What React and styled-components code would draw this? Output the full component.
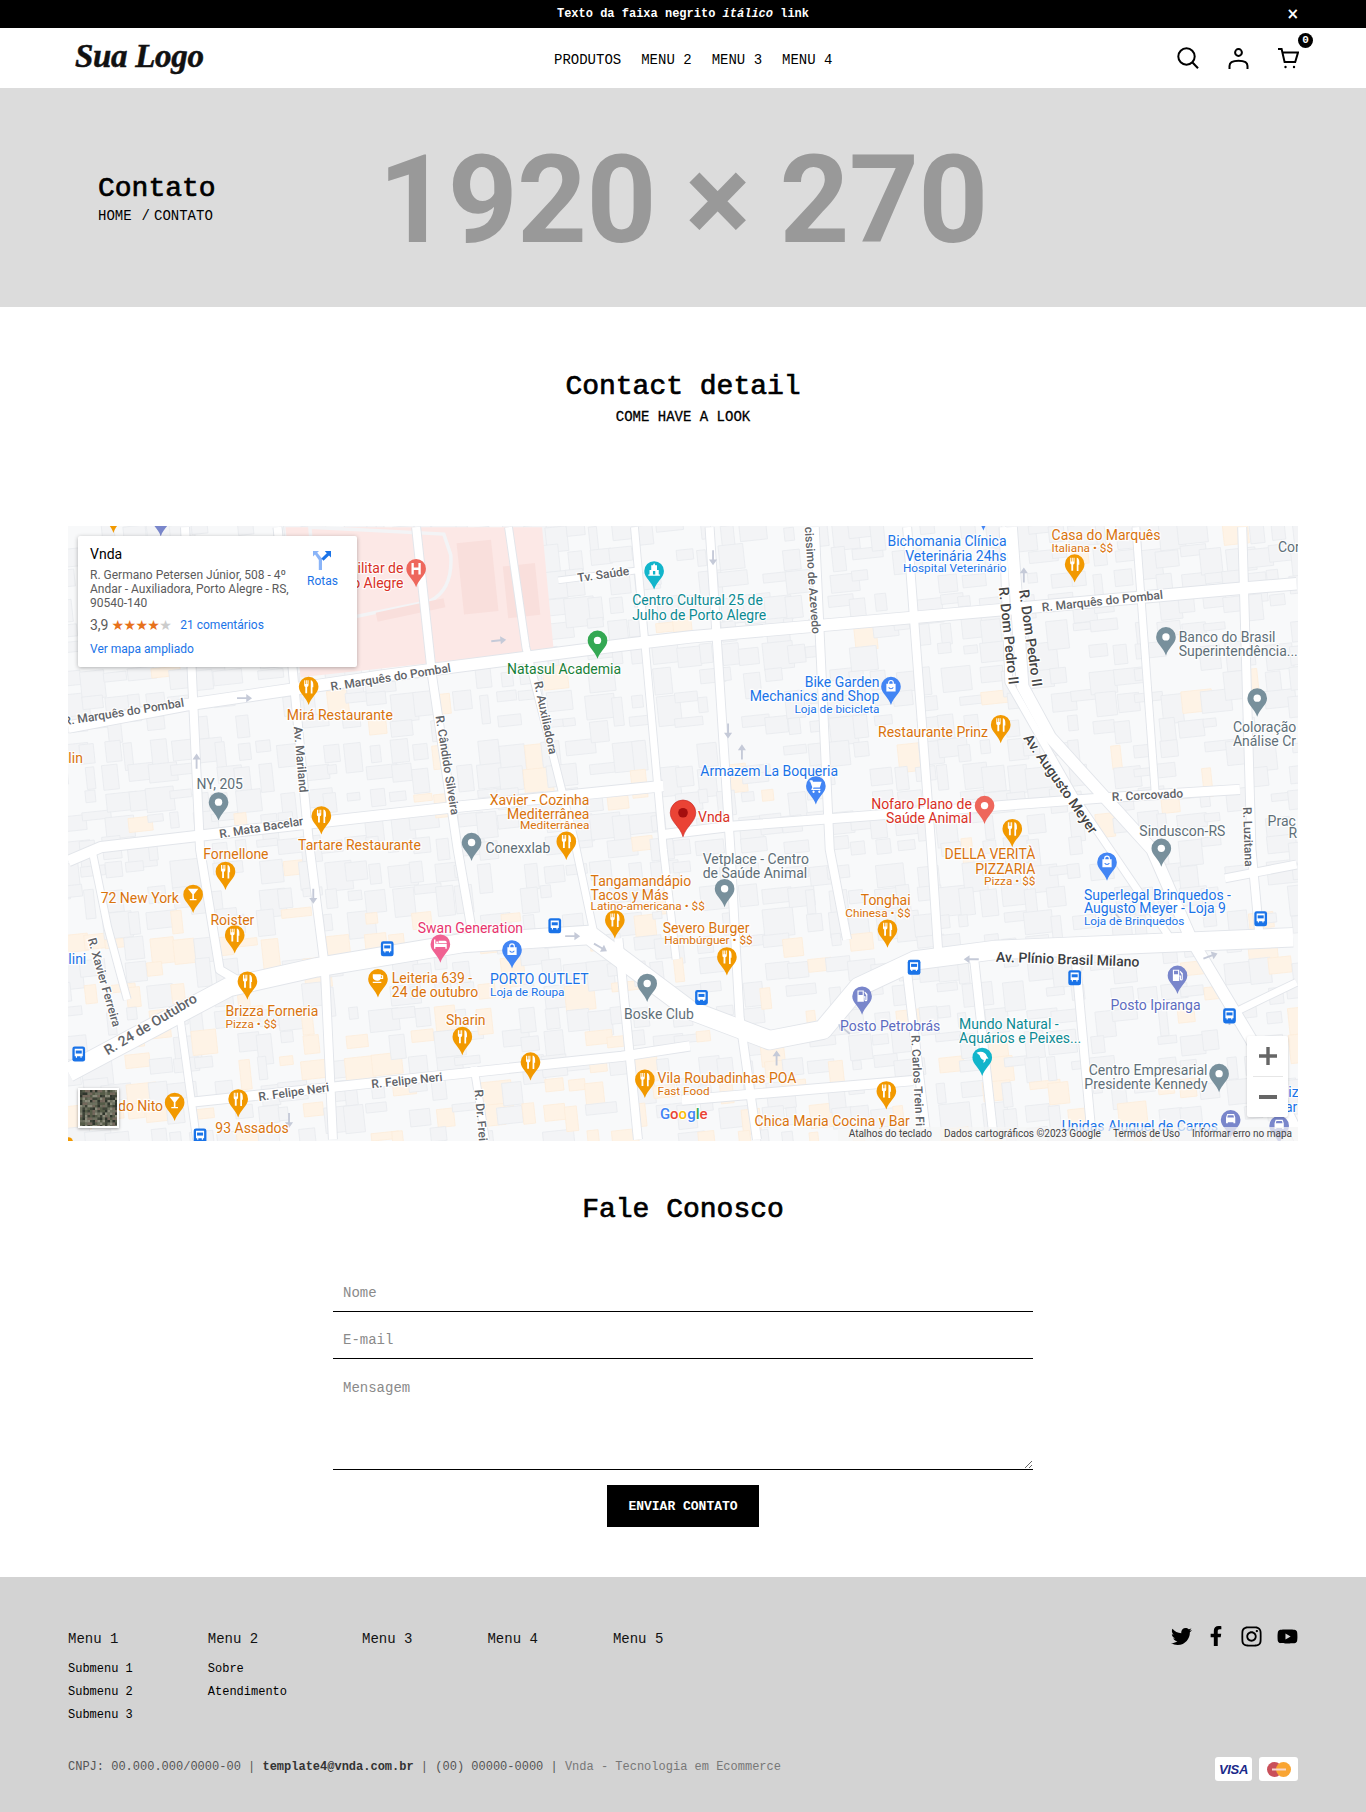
import React from 'react';
import styled, { createGlobalStyle } from 'styled-components';
import { FaTwitter, FaFacebookF, FaInstagram, FaYoutube } from 'react-icons/fa';

const Global = createGlobalStyle`
  html, body { margin: 0; padding: 0; background: #fff; }
  body { font-family: "Liberation Mono", monospace; color: #000; }
  * { box-sizing: border-box; }
`;

const Page = styled.div`width: 1366px; display: flex; flex-direction: column;`;

const TopBar = styled.div`
  height: 28px; background: #000; color: #fff; position: relative;
  display: flex; align-items: center; justify-content: center;
  font-size: 12px; font-weight: 700;
`;
const Close = styled.span`position: absolute; right: 67px; top: 6px; font-size: 15px; line-height: 16px; font-family: "DejaVu Sans", sans-serif;`;

const Header = styled.header`
  height: 60px; background: #fff; display: grid;
  grid-template-columns: 479px 1fr auto; align-items: center;
  padding: 0 68px 0 75px;
`;
const Logo = styled.div`
  font-family: "Liberation Serif", serif; font-style: italic; font-weight: 700;
  font-size: 33px; letter-spacing: -0.3px; line-height: 40px; color: #111; margin-top: -4px;
  -webkit-text-stroke: 0.5px #111;
`;
const Nav = styled.nav`display: flex; gap: 20px; font-size: 14px; margin-top: 4px;`;
const NavItem = styled.a`color: #000; white-space: nowrap;`;
const Tools = styled.div`display: flex; gap: 29px; align-items: center; margin-top: 0; margin-right: -1px;`;
const CartWrap = styled.div`position: relative; width: 21px; height: 21px;`;
const Badge = styled.span`
  position: absolute; left: 20px; top: -15px; width: 15px; height: 15px; border-radius: 50%;
  background: #000; color: #fff; font-size: 11px; font-weight: 700; line-height: 15px; text-align: center;
`;

const Hero = styled.section`
  height: 219px; background: #dcdcdc; position: relative;
  display: flex; align-items: center; justify-content: center;
`;
const HeroPlaceholder = styled.div`
  font-family: Roboto, sans-serif; font-weight: 700; font-size: 122px; line-height: 122px; margin-top: 6px;
  color: #999; letter-spacing: -0.6px; white-space: pre; filter: blur(0.5px);
`;
const HeroCaption = styled.div`position: absolute; left: 98px; top: 85px;`;
const HeroTitle = styled.h1`margin: 0; font-size: 28px; line-height: 32px; font-weight: 400; -webkit-text-stroke: 0.7px #000;`;
const Crumbs = styled.div`font-size: 14px; line-height: 20px; margin-top: 1px; display: flex;`;
const CrumbSep = styled.span`margin: 0 4px 0 10px;`;

const Centered = styled.section`display: flex; flex-direction: column; align-items: center;`;
const SectionTitle = styled.h2`
  margin: ${p => p.$top}px 0 0; font-size: 28px; line-height: 36px; font-weight: 400; -webkit-text-stroke: 0.7px #000;
`;
const SectionSub = styled.div`margin-top: 2px; font-size: 14px; line-height: 20px; -webkit-text-stroke: 0.3px #000;`;

const MapFrame = styled.div`
  position: relative; margin: 99px 0 0 68px; width: 1230px; height: 615px; overflow: hidden; background: #f8f9fa;
`;
const MapSvg = styled.svg`display: block; width: 1230px; height: 615px;`;
const Label = styled.text`
  font-family: Roboto, sans-serif; font-size: ${p => (p.$small ? 10.2 : 12.1)}px;
  fill: ${p => p.$color}; text-anchor: ${p => p.$anchor};
  dominant-baseline: central; paint-order: stroke; stroke: #fff; stroke-width: 2px; stroke-opacity: .85;
`;
const RoadLabel = styled.text`
  font-family: Roboto, sans-serif; font-size: ${p => p.$size || 10.4}px; font-weight: 500;
  fill: ${p => p.$color || '#5f6368'}; text-anchor: middle; dominant-baseline: central;
  paint-order: stroke; stroke: #fff; stroke-width: 2px;
`;
const InfoCard = styled.div`
  position: absolute; left: 10px; top: 10px; width: 279px; height: 131px; background: #fff;
  box-shadow: 0 1px 4px rgba(0,0,0,.3); border-radius: 2px; padding: 10px 12px;
  font-family: Roboto, sans-serif; font-size: 12px; color: #5b5b5b; display: flex;
`;
const InfoMain = styled.div`width: 205px;`;
const InfoName = styled.div`font-size: 14px; font-weight: 400; color: #000; line-height: 17px; margin-bottom: 5px;`;
const InfoAddress = styled.div`line-height: 14px;`;
const InfoRating = styled.div`display: flex; align-items: center; margin-top: 5px; line-height: 20px;`;
const RateValue = styled.span`font-size: 14px; color: #5b5b5b;`;
const Stars = styled.span`font-family: "DejaVu Sans", sans-serif; font-size: 14px; letter-spacing: -0.6px; color: #e7711b; margin-left: 3px;`;
const StarOff = styled.span`color: #ccc;`;
const MapLink = styled.a`color: #1a73e8; font-size: 12px; margin-left: ${p => p.$left || 0}px;`;
const ExpandRow = styled.div`margin-top: 6px; line-height: 16px;`;
const Directions = styled.div`display: flex; flex-direction: column; align-items: center; margin-left: 12px; margin-top: 4px; gap: 4px; color: #1a73e8;`;
const ZoomBox = styled.div`
  position: absolute; right: 10px; bottom: 24px; width: 41px; height: 81px; background: #fff;
  box-shadow: 0 1px 3px rgba(0,0,0,.18); border-radius: 2px; display: flex; flex-direction: column; align-items: center;
`;
const ZoomBtn = styled.div`height: 40px; display: flex; align-items: center; justify-content: center;`;
const ZoomRule = styled.div`width: 30px; height: 1px; background: #e6e6e6;`;
const Satellite = styled.div`
  position: absolute; left: 10px; bottom: 13px; width: 41px; height: 40px; border: 2px solid #fff;
  box-shadow: 0 1px 3px rgba(0,0,0,.35); background: #5a5f52; overflow: hidden;
`;
const Attribution = styled.div`
  position: absolute; right: 0; bottom: 0; height: 14px; width: 460px; background: rgba(245,245,245,.72);
  font-family: Roboto, sans-serif; font-size: 10px; line-height: 14px; color: #444;
  display: flex; justify-content: flex-end; gap: 12px; padding-right: 6px; white-space: nowrap;
`;

const FormWrap = styled.form`width: 700px; margin: 44px auto 0; display: flex; flex-direction: column; gap: 7px;`;
const Field = styled.input`
  height: 40px; border: 0; border-bottom: 1px solid #000; outline: 0; padding: 3px 10px 0;
  font: 14px "Liberation Mono", monospace; background: transparent;
  &::placeholder { color: #8a8a8a; opacity: 1; }
`;
const Area = styled.textarea`
  height: 104px; border: 0; border-bottom: 1px solid #000; outline: 0; padding: 14px 10px;
  font: 14px "Liberation Mono", monospace; background: transparent; display: block;
  &::placeholder { color: #8a8a8a; opacity: 1; }
`;
const Submit = styled.button`
  width: 152px; height: 42px; margin: 8px auto 0; background: #000; color: #fff; border: 0;
  font: 700 13px "Liberation Mono", monospace;
`;

const Footer = styled.footer`
  margin-top: 50px; height: 235px; background: #d3d3d3; padding: 52px 68px 0;
  display: flex; flex-direction: column;
`;
const FooterTop = styled.div`display: flex; justify-content: space-between; height: 124px;`;
const FooterCols = styled.div`display: flex; gap: 75px;`;
const FooterCol = styled.div`display: flex; flex-direction: column;`;
const ColHead = styled.div`font-size: 14px; line-height: 20px; margin-bottom: 9px; color: #111;`;
const ColLink = styled.a`font-size: 12px; line-height: 23px; color: #000;`;
const Social = styled.div`display: flex; align-items: center; gap: 14px; height: 20px; margin-top: -3px; color: #000;`;
const FooterBottom = styled.div`display: flex; justify-content: space-between; align-items: center;`;
const Legal = styled.div`font-size: 12px; line-height: 20px; color: #555;`;
const LegalStrong = styled.strong`color: #333; font-weight: 700;`;
const LegalSoft = styled.span`color: #777;`;
const PayRow = styled.div`display: flex; gap: 7px; margin-top: 4px;`;
const PayCard = styled.div`
  width: ${p => p.$w}px; height: 24px; background: #fff; border-radius: 3px;
  display: flex; align-items: center; justify-content: center;
`;
const VisaText = styled.span`
  font-family: "Liberation Sans", sans-serif; font-style: italic; font-weight: 700; font-size: 13px; color: #1a2a8a; letter-spacing: -.3px;
`;

/* ---- map data, in a 1063x532 drawing space ---- */
const roads = [
  [10, '59,629 160,610 337,584 538,558 597,551 861,528 1062,510 1122,505'],
  [9, '59,745 87,733 190,721 396,698 574,680'],
  [8, '574,722 632,715 892,695 960,690 1073,683'],
  [16, '59,928 198,854 274,837 400,816 510,809 597,874 666,900 712,891 743,854 792,831 861,822 1119,811'],
  [10, '875,456 885,594 909,638 997,735 1031,813 1083,900 1125,986'],
  [6, '868,456 873,590 930,690 1015,815'],
  [7, '240,456 253,577 267,727 281,837 288,986'],
  [7, '360,456 374,586 396,735 410,815'],
  [6, '410,923 420,986'],
  [6, '440,456 455,560 497,727 514,808'],
  [7, '535,812 552,986'],
  [6, '549,456 574,735 585,830'],
  [7, '614,456 632,735 640,880 655,986'],
  [7, '705,456 718,735 733,813'],
  [7, '785,842 802,986'],
  [7, '785,456 806,735 812,825'],
  [6, '983,456 1000,690'],
  [7, '1075,456 1083,735 1090,810'],
  [7, '160,456 173,735 190,839 205,848'],
  [6, '80,738 93,802 110,865'],
  [6, '156,883 170,986'],
  [8, '163,954 538,914 597,905'],
  [8, '590,952 790,935'],
  [5, '483,502 555,493'],
  [7, '843,830 860,986'],
  [7, '930,820 945,986'],
  [7, '1060,760 1122,748'],
  [6, '1122,850 1060,880'],
];

function seeded(seed) {
  let s = seed;
  return () => { s = (s * 16807) % 2147483647; return (s - 1) / 2147483646; };
}
const buildings = (() => {
  const r = seeded(4217);
  const list = [];
  for (let x = 30; x < 1160; x += 19) {
    for (let y = 430; y < 1010; y += 21) {
      if (r() < 0.24) continue;
      const warm = (y > 770 && x < 700) || (x > 1000 && y > 800) || (y > 900);
      const w = 7 + r() * 20; const h = 6 + r() * 20;
      const orange = r() < (warm ? 0.34 : 0.05);
      list.push({ x: x + r() * 6, y: y + r() * 6, w, h, orange });
    }
  }
  return list;
})();
const satellite = (() => {
  const r = seeded(99);
  const tones = ['#3f4438', '#6d705f', '#565c48', '#8a8a7a', '#2f352c', '#74685c'];
  const list = [];
  for (let x = 0; x < 40; x += 2.5) for (let y = 0; y < 40; y += 2.5) list.push({ x, y, c: tones[Math.floor(r() * tones.length)] });
  return list;
})();

const C = { o: '#d9730d', b: '#1a73e8', g: '#5f6f78', r: '#d93025', p: '#e8336d', v: '#5c6bc0', t: '#0b8a93', n: '#188038' };
const labels = [
  ['Hospital Militar de', 349, 491, 'r', 'end'], ['Porto Alegre', 349, 504, 'r', 'end'],
  ['Centro Cultural 25 de', 547, 519, 't', 'start'], ['Julho de Porto Alegre', 547, 532, 't', 'start'],
  ['Natasul Academia', 488, 579, 'n', 'middle'], ['Mirá Restaurante', 294, 619, 'o', 'middle'],
  ['Xavier - Cozinha', 510, 692, 'o', 'end'], ['Mediterrânea', 510, 704, 'o', 'end'], ['Mediterrânea', 510, 714, 'o', 'end', 1],
  ['Tartare Restaurante', 311, 731, 'o', 'middle'], ['Fornellone', 204, 739, 'o', 'middle'],
  ['72 New York', 87, 777, 'o', 'start'], ['Roister', 201, 796, 'o', 'middle'],
  ['Leiteria 639 -', 339, 846, 'o', 'start'], ['24 de outubro', 339, 858, 'o', 'start'],
  ['Brizza Forneria', 195, 875, 'o', 'start'], ['Pizza • $$', 195, 886, 'o', 'start', 1],
  ['Sharin', 403, 883, 'o', 'middle'], ['Bar do Nito', 141, 957, 'o', 'end'], ['93 Assados', 218, 976, 'o', 'middle'],
  ['Tangamandápio', 511, 762, 'o', 'start'], ['Tacos y Más', 511, 774, 'o', 'start'], ['Latino-americana • $$', 511, 784, 'o', 'start', 1],
  ['Severo Burger', 611, 803, 'o', 'middle'], ['Hambúrguer • $$', 613, 813, 'o', 'middle', 1],
  ['Vila Roubadinhas POA', 569, 933, 'o', 'start'], ['Fast Food', 569, 944, 'o', 'start', 1],
  ['Chica Maria Cocina y Bar', 653, 970, 'o', 'start'], ['Tonghai', 788, 779, 'o', 'end'], ['Chinesa • $$', 788, 790, 'o', 'end', 1],
  ['Restaurante Prinz', 855, 633, 'o', 'end'], ['DELLA VERITÀ', 896, 739, 'o', 'end'], ['PIZZARIA', 896, 752, 'o', 'end'], ['Pizza • $$', 896, 762, 'o', 'end', 1],
  ['Casa do Marquês', 910, 463, 'o', 'start'], ['Italiana • $$', 910, 474, 'o', 'start', 1], ['lin', 59, 656, 'o', 'start'],
  ['Bichomania Clínica', 871, 468, 'b', 'end'], ['Veterinária 24hs', 871, 481, 'b', 'end'], ['Hospital Veterinário', 871, 491, 'b', 'end', 1],
  ['Bike Garden', 761, 590, 'b', 'end'], ['Mechanics and Shop', 761, 602, 'b', 'end'], ['Loja de bicicleta', 761, 613, 'b', 'end', 1],
  ['Armazem La Boqueria', 606, 667, 'b', 'start'], ['PORTO OUTLET', 424, 847, 'b', 'start'], ['Loja de Roupa', 424, 858, 'b', 'start', 1],
  ['Superlegal Brinquedos -', 938, 774, 'b', 'start'], ['Augusto Meyer - Loja 9', 938, 786, 'b', 'start'], ['Loja de Brinquedos', 938, 797, 'b', 'start', 1],
  ['Unidas Aluguel de Carros', 1054, 974, 'b', 'end'], ['lini', 59, 830, 'b', 'start'], ['liz', 1112, 945, 'b', 'start'], ['ar', 1112, 958, 'b', 'start'],
  ['NY, 205', 190, 678, 'g', 'middle'], ['Conexxlab', 420, 734, 'g', 'start'], ['Vetplace - Centro', 608, 743, 'g', 'start'], ['de Saúde Animal', 608, 755, 'g', 'start'],
  ['Boske Club', 540, 877, 'g', 'start'], ['Banco do Brasil', 1020, 551, 'g', 'start'], ['Superintendência...', 1020, 563, 'g', 'start'],
  ['Coloração', 1067, 629, 'g', 'start'], ['Análise Cr', 1067, 641, 'g', 'start'], ['Sinduscon-RS', 986, 719, 'g', 'start'],
  ['Praç', 1097, 710, 'g', 'start'], ['R', 1115, 721, 'g', 'start'], ['Centro Empresarial', 1045, 926, 'g', 'end'], ['Presidente Kennedy', 1045, 938, 'g', 'end'], ['Cor', 1106, 473, 'g', 'start'],
  ['Vnda', 604, 707, 'r', 'start'], ['Nofaro Plano de', 841, 696, 'r', 'end'], ['Saúde Animal', 841, 708, 'r', 'end'],
  ['Swan Generation', 407, 803, 'p', 'middle'], ['Posto Petrobrás', 727, 888, 'v', 'start'], ['Posto Ipiranga', 961, 870, 'v', 'start'],
  ['Mundo Natural -', 830, 886, 't', 'start'], ['Aquários e Peixes...', 830, 898, 't', 'start'],
];
const roadLabels = [
  ['R. Marquês do Pombal', 338, 586, -9], ['R. Marquês do Pombal', 107, 616, -9], ['R. Marquês do Pombal', 954, 520, -6],
  ['Tv. Saúde', 522, 497, -8], ['Av. Mariland', 260, 657, 85], ['R. Cândido Silveira', 387, 662, 81], ['R. Auxiliadora', 472, 621, 78],
  ['cissimo de Azevedo', 703, 502, 86], ['R. Dom Pedro II', 873, 550, 84, 12.2, '#444'], ['R. Dom Pedro II', 892, 552, 82, 12.2, '#444'], ['Av. Augusto Meyer', 918, 678, 55, 12.2, '#444'],
  ['R. Corcovado', 993, 688, -3], ['R. Luzitana', 1080, 724, 88], ['R. Mata Bacelar', 226, 716, -9], ['R. Xavier Ferreira', 90, 850, 74],
  ['R. 24 de Outubro', 130, 886, -31, 12.2], ['Av. Plínio Brasil Milano', 924, 830, 2, 12.2, '#3c4043'],
  ['R. Felipe Neri', 254, 945, -8], ['R. Felipe Neri', 352, 935, -6], ['R. Dr. Frei', 416, 965, 85], ['R. Carlos Trein Fi', 794, 935, 87],
];
const PIN = 'M0 0C-2-7-8.5-10-8.5-16A8.5 8.5 0 1 1 8.5-16C8.5-10 2-7 0 0Z';
const OR = '#f29900', GR = '#78909c', BL = '#4285f4', RD = '#ee675c', TL = '#12b5cb', PK = '#f06292', VL = '#7986cb', GN = '#34a853';
const pins = [
  [267, 610, OR, 'food'], [278, 722, OR, 'food'], [490, 744, OR, 'food'], [195, 770, OR, 'food'], [203, 825, OR, 'food'], [214, 865, OR, 'food'],
  [400, 913, OR, 'food'], [459, 935, OR, 'food'], [532, 812, OR, 'food'], [629, 844, OR, 'food'], [768, 820, OR, 'food'], [558, 950, OR, 'food'],
  [767, 960, OR, 'food'], [206, 967, OR, 'food'], [876, 733, OR, 'food'], [866, 643, OR, 'food'], [930, 504, OR, 'food'],
  [167, 790, OR, 'drink'], [151, 970, OR, 'drink'], [327, 863, OR, 'cup'],
  [189, 710, GR, 'dot'], [408, 745, GR, 'dot'], [627, 785, GR, 'dot'], [560, 867, GR, 'dot'], [1009, 567, GR, 'dot'], [1088, 620, GR, 'dot'], [1005, 750, GR, 'dot'], [1055, 945, GR, 'dot'],
  [771, 610, BL, 'bag'], [443, 838, BL, 'bag'], [958, 762, BL, 'bag'], [706, 696, BL, 'cart'],
  [852, 713, RD, 'dot'], [517, 570, GN, 'dot'], [566, 510, TL, 'museum'], [360, 508, RD, 'H'], [381, 833, PK, 'bed'],
  [746, 878, VL, 'gas'], [1019, 860, VL, 'gas'], [850, 931, TL, 'dolphin'], [1065, 985, VL, 'car'], [1107, 990, VL, 'car'],
  [98, 461, OR, 'dot'], [139, 464, VL, 'dot'], [851, 459, BL, 'dot'],
];
const buses = [[335, 821], [480, 801], [68, 912], [173, 983], [607, 863], [791, 837], [930, 846], [1091, 795], [1064, 879]];
const arrows = [[212, 604, 0], [432, 554, -6], [170, 658, -90], [271, 776, 90], [250, 970, 90], [630, 633, 90], [617, 483, 90], [886, 497, -90], [642, 650, -90], [496, 810, 0], [520, 820, 30], [730, 890, 220], [965, 790, 230], [1048, 827, -20], [672, 915, -90], [840, 830, 180], [1064, 880, -90]];

function PinIcon({ kind }) {
  switch (kind) {
    case 'dot': return <circle cy="-16" r="3.2" fill="#fff" />;
    case 'food': return <path fill="#fff" d="M-3.8-21.5h.9v3.2h.6v-3.2h.7v3.2h.6v-3.2h.9v4.2a1.6 1.6 0 0 1-1.2 1.6v5.4h-1.6v-5.4a1.6 1.6 0 0 1-1-1.6zM2-21.6c1.4.2 2 1.8 2 3.8v2.4H3.3v5.4H1.8V-21.5z" />;
    case 'drink': return <path fill="#fff" d="M-4.5-21h9L.7-16.2v4h2.2v1.2h-5.800v-1.2h2.200v-4zM-2.500-19.800h5l-.8 1h-3.400z" />;
    case 'cup': return <path fill="#fff" d="M-4.500-20h7v.8h2v3.200h-2.200a3.200 3.200 0 0 1-2.300 1.600h-.4c-2 0-4.100-1-4.100-3zM2.500-18.200v1.200h1v-1.200zM-4.500-13.500h7.400v1h-7.400z" />;
    case 'bag': return <path fill="#fff" d="M-4-18.500h1.500v-.8a2.500 2.500 0 0 1 5 0v.8H4v6.800h-8zM-1.500-18.500h3v-.8a1.500 1.500 0 0 0-3 0zM-2.400-15.400a2.500 2.500 0 0 0 4.800 0h-1a1.600 1.600 0 0 1-2.800 0z" fillRule="evenodd" />;
    case 'cart': return <path fill="#fff" d="M-5-21h2l.5 1.400H5l-1.600 5H-2l-.5 1h6.400v1.100h-8l1-2.400L-5-20h-1zM-2-12a1 1 0 1 0 .01 0zM3-12a1 1 0 1 0 .01 0z" />;
    case 'museum': return <path fill="#fff" d="M-5-13h10v1h-10zM-4-17h8v4h-8zM-2.500-21h5v4h-5zM0-23l1 2h-2zM-1-16h2v3h-2z" fillRule="evenodd" />;
    case 'H': return <path fill="#fff" d="M-4-21h2v4h4v-4h2v10H2v-4h-4v4h-2z" />;
    case 'bed': return <path fill="#fff" d="M-5.500-20h1.200v3.600h9.800V-12h-1.200v-1.600h-8.600V-12h-1.200zM-3.600-18.400h1.800v1.600h-1.800zM-1.400-19h5.500a1.400 1.400 0 0 1 1.400 1.400v.6h-6.900z" />;
    case 'gas': return <path fill="#fff" d="M-4-21h5.500v9.800H-4zM-3-20v3h3.500v-3zM2.400-20l2.200 2v5a1.300 1.300 0 0 1-2.600 0v-2h-.4v-1h1.400v3c0 .4.600.4.600 0v-3.600L2-19.200z" fillRule="evenodd" />;
    case 'dolphin': return <path fill="#fff" d="M-5-20c4-2 8-.6 9 3l1.400 2-2 .2c-.6 2-1.200 3-2.400 3.600l.3-2.600c-1.800-.4-3-2-3.600-4.200L-5-20z" />;
    case 'car': return <path fill="#fff" d="M-4-18l1-3h6l1 3v5h-1.600v-1h-4.800v1H-4zM-2.400-20l-.5 2h5.800l-.5-2z" fillRule="evenodd" />;
    default: return null;
  }
}

function MapDrawing() {
  return (
    <MapSvg viewBox="59 455 1064 532.3" aria-label="Mapa">
      <rect x="59" y="455" width="1064" height="533" fill="#f8f9fa" />
      {buildings.map((b, i) => (
        <rect key={i} x={b.x} y={b.y} width={b.w} height={b.h}
          fill={b.orange ? '#fef3e6' : '#f3f4f6'} stroke={b.orange ? '#fdeddb' : '#e9ebee'} strokeWidth=".7"
          transform={`rotate(-6 ${b.x} ${b.y})`} />
      ))}
      <path d="M247 456H469L479 562L260 586Z" fill="#fce8e6" />
      <path d="M268 456L276 540L372 520Q392 510 390 480L384 462Z" fill="none" stroke="#f3f4f6" strokeWidth="3" />
      <g fill="#f9dfdc">
        <rect x="395" y="470" width="30" height="62" transform="rotate(-6 395 470)" />
        <rect x="435" y="490" width="28" height="45" transform="rotate(-6 435 490)" />
        <rect x="325" y="530" width="60" height="8" transform="rotate(-12 325 530)" />
      </g>
      <g fill="none" strokeLinecap="butt" strokeLinejoin="round">
        {roads.map(([w, pts], i) => <polyline key={i} points={pts} stroke="#e2e5ea" strokeWidth={w + 1.6} />)}
        {roads.map(([w, pts], i) => <polyline key={i} points={pts} stroke="#ffffff" strokeWidth={w} />)}
      </g>
      {arrows.map(([x, y, a], i) => (
        <path key={i} d="M-7-.8H1V-3.500L6 0 1 3.500V.8H-7Z" fill="#c5cad8" transform={`translate(${x} ${y}) rotate(${a})`} />
      ))}
      {roadLabels.map(([t, x, y, a, s, c], i) => (
        <RoadLabel key={i} x={x} y={y} $size={s} $color={c} transform={`rotate(${a} ${x} ${y})`}>{t}</RoadLabel>
      ))}
      {labels.map(([t, x, y, c, anchor, small], i) => (
        <Label key={i} x={x} y={y} $color={C[c]} $anchor={anchor} $small={small}>{t}</Label>
      ))}
      {buses.map(([x, y], i) => (
        <g key={i} transform={`translate(${x} ${y})`}>
          <rect x="-5.500" y="-6.500" width="11" height="13" rx="2" fill="#1a73e8" />
          <path d="M-3.500-4.500h7v6.500h-1v1.200h-1V2h-3v1.200h-1V2h-1z" fill="#fff" />
          <rect x="-2.600" y="-3" width="5.200" height="2.600" fill="#1a73e8" />
        </g>
      ))}
      {pins.map(([x, y, color, kind], i) => (
        <g key={i} transform={`translate(${x} ${y})`}>
          <path d={PIN} fill={color} />
          <PinIcon kind={kind} />
        </g>
      ))}
      <g transform="translate(591 724) scale(1.3)">
        <path d={PIN} fill="#ea4335" stroke="#c5221f" strokeWidth=".4" />
        <circle cy="-16" r="3.200" fill="#a50e0e" />
      </g>
      <text x="571" y="968" fontFamily="Roboto, sans-serif" fontSize="13" fontWeight="500" paintOrder="stroke" stroke="#fff" strokeWidth="1.500">
        <tspan fill="#4285f4">G</tspan><tspan fill="#ea4335">o</tspan><tspan fill="#fbbc05">o</tspan><tspan fill="#4285f4">g</tspan><tspan fill="#34a853">l</tspan><tspan fill="#ea4335">e</tspan>
      </text>
      <circle cx="59" cy="988" r="4" fill="#f29900" />
    </MapSvg>
  );
}

const Search = () => (
  <svg width="22" height="22" viewBox="0 0 22 22" fill="none" stroke="#000" strokeWidth="2"><circle cx="9.500" cy="9.500" r="8.200" /><path d="M15.500 15.500l5.500 5.800" /></svg>
);
const User = () => (
  <svg width="21" height="21" viewBox="0 0 21 21" fill="none" stroke="#000" strokeWidth="2"><circle cx="10.500" cy="4.500" r="3.400" /><path d="M1.500 21v-3c0-3.500 3-5.200 9-5.200s9 1.700 9 5.200v3" /></svg>
);
const Cart = () => (
  <svg width="21" height="21" viewBox="0 0 21 21" fill="none" stroke="#000" strokeWidth="2"><path d="M0 1h3.600l3 13h10.600L20 4.500H5" /><circle cx="7.500" cy="19" r="1.200" fill="#000" stroke="none" /><circle cx="16" cy="19" r="1.200" fill="#000" stroke="none" /></svg>
);

export default function App() {
  return (
    <Page>
      <Global />
      <TopBar>
        <span>Texto da faixa negrito <em>itálico</em> link</span>
        <Close>×</Close>
      </TopBar>
      <Header>
        <Logo>Sua Logo</Logo>
        <Nav>
          <NavItem>PRODUTOS</NavItem><NavItem>MENU 2</NavItem><NavItem>MENU 3</NavItem><NavItem>MENU 4</NavItem>
        </Nav>
        <Tools>
          <Search />
          <User />
          <CartWrap><Cart /><Badge>0</Badge></CartWrap>
        </Tools>
      </Header>
      <Hero>
        <HeroPlaceholder>1920 × 270</HeroPlaceholder>
        <HeroCaption>
          <HeroTitle>Contato</HeroTitle>
          <Crumbs>HOME<CrumbSep>/</CrumbSep>CONTATO</Crumbs>
        </HeroCaption>
      </Hero>
      <Centered>
        <SectionTitle $top={62}>Contact detail</SectionTitle>
        <SectionSub>COME HAVE A LOOK</SectionSub>
      </Centered>
      <MapFrame>
        <MapDrawing />
        <InfoCard>
          <InfoMain>
            <InfoName>Vnda</InfoName>
            <InfoAddress>R. Germano Petersen Júnior, 508 - 4º Andar - Auxiliadora, Porto Alegre - RS, 90540-140</InfoAddress>
            <InfoRating>
              <RateValue>3,9</RateValue>
              <Stars>★★★★<StarOff>★</StarOff></Stars>
              <MapLink $left={9}>21 comentários</MapLink>
            </InfoRating>
            <ExpandRow><MapLink>Ver mapa ampliado</MapLink></ExpandRow>
          </InfoMain>
          <Directions>
            <svg width="20" height="20" viewBox="0 0 20 20">
              <path d="M1 1h6l-1.800 1.800L10 8.500V20H6.800v-10L3 4.500 1 6.500z" fill="#8ab4f8" />
              <path d="M19 1v6.400l-2-2L11.500 10.800 9.400 8.500 14.800 3.200 12.800 1z" fill="#1a73e8" />
            </svg>
            <span>Rotas</span>
          </Directions>
        </InfoCard>
        <ZoomBox>
          <ZoomBtn><svg width="18" height="18" viewBox="0 0 18 18"><path d="M7.300 0h3.400v7.300H18v3.400h-7.300V18H7.300v-7.300H0V7.300h7.300z" fill="#666" /></svg></ZoomBtn>
          <ZoomRule />
          <ZoomBtn><svg width="18" height="4" viewBox="0 0 18 4"><rect width="18" height="4" fill="#666" /></svg></ZoomBtn>
        </ZoomBox>
        <Satellite>
          <svg width="37" height="36" viewBox="0 0 37 36">
            {satellite.map((s, i) => <rect key={i} x={s.x} y={s.y} width="2.600" height="2.600" fill={s.c} />)}
          </svg>
        </Satellite>
        <Attribution>
          <span>Atalhos do teclado</span>
          <span>Dados cartográficos ©2023 Google</span>
          <span>Termos de Uso</span>
          <span>Informar erro no mapa</span>
        </Attribution>
      </MapFrame>
      <Centered>
        <SectionTitle $top={51}>Fale Conosco</SectionTitle>
      </Centered>
      <FormWrap>
        <Field placeholder="Nome" />
        <Field placeholder="E-mail" />
        <Area placeholder="Mensagem" />
        <Submit type="button">ENVIAR CONTATO</Submit>
      </FormWrap>
      <Footer>
        <FooterTop>
          <FooterCols>
            <FooterCol><ColHead>Menu 1</ColHead><ColLink>Submenu 1</ColLink><ColLink>Submenu 2</ColLink><ColLink>Submenu 3</ColLink></FooterCol>
            <FooterCol><ColHead>Menu 2</ColHead><ColLink>Sobre</ColLink><ColLink>Atendimento</ColLink></FooterCol>
            <FooterCol><ColHead>Menu 3</ColHead></FooterCol>
            <FooterCol><ColHead>Menu 4</ColHead></FooterCol>
            <FooterCol><ColHead>Menu 5</ColHead></FooterCol>
          </FooterCols>
          <Social>
            <FaTwitter size={21} /><FaFacebookF size={20} /><FaInstagram size={23} /><FaYoutube size={21} />
          </Social>
        </FooterTop>
        <FooterBottom>
          <Legal>CNPJ: 00.000.000/0000-00 | <LegalStrong>template4@vnda.com.br</LegalStrong> | (00) 00000-0000 | <LegalSoft>Vnda - Tecnologia em Ecommerce</LegalSoft></Legal>
          <PayRow>
            <PayCard $w={37}><VisaText>VISA</VisaText></PayCard>
            <PayCard $w={39}>
              <svg width="24" height="15" viewBox="0 0 24 15"><circle cx="7.500" cy="7.500" r="7.500" fill="#c9505a" /><circle cx="16.500" cy="7.500" r="7.500" fill="#f9a533" /><rect x="5" y="6.500" width="14" height="2" fill="#f7d7d0" /></svg>
            </PayCard>
          </PayRow>
        </FooterBottom>
      </Footer>
    </Page>
  );
}
